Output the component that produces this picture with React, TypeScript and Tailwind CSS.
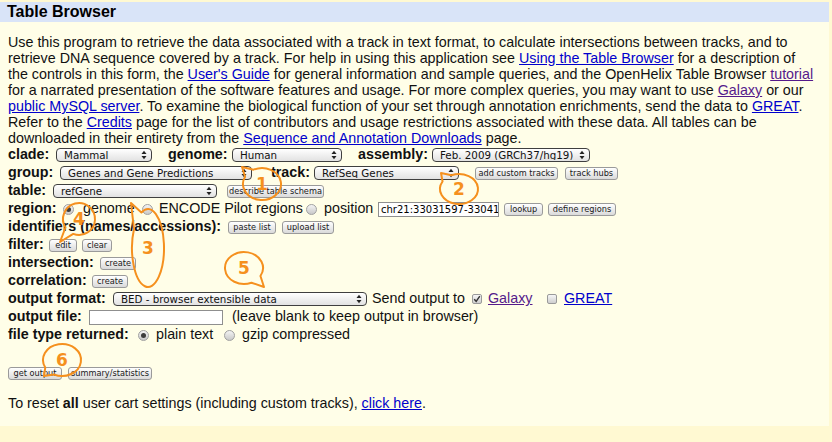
import React from 'react';

const widget = "font-['DejaVu_Sans',sans-serif]";

function Arrows() {
  return (
    <svg width="6" height="10" viewBox="0 0 6 10" className="shrink-0">
      <path d="M0.5 4 L3 0.8 L5.5 4 Z" fill="#222" />
      <path d="M0.5 6 L5.5 6 L3 9.2 Z" fill="#222" />
    </svg>
  );
}

function Select({ w, label }: { w: string; label: string }) {
  return (
    <div
      className={`${w} h-[14px] shrink-0 flex items-center rounded-[4px] border border-[#3f3f3f] bg-linear-to-b from-white to-[#e2e2e2] pl-[7px] pr-[4px] ${widget} text-[10.3px] leading-none text-[#111]`}
    >
      <span className="flex-1 truncate">{label}</span>
      <Arrows />
    </div>
  );
}

function Btn({ w, children }: { w: string; children: React.ReactNode }) {
  return (
    <button
      type="button"
      className={`${w} h-[13px] shrink-0 flex items-center justify-center rounded-[3px] border border-[#9a9a9a] bg-linear-to-b from-white to-[#dadada] ${widget} text-[8.2px] leading-none text-[#1a1a1a] whitespace-nowrap`}
    >
      {children}
    </button>
  );
}

function Radio({ checked = false }: { checked?: boolean }) {
  return (
    <span className="w-[11px] h-[11px] shrink-0 rounded-full border border-[#a0a0a0] bg-linear-to-b from-[#f4f4f4] to-[#c9c9c9] flex items-center justify-center">
      {checked && <span className="w-[5px] h-[5px] rounded-full bg-[#3c3c3c]" />}
    </span>
  );
}

function Check({ checked = false }: { checked?: boolean }) {
  return (
    <span className="w-[10px] h-[10px] shrink-0 rounded-[2px] border border-[#9a9a9a] bg-linear-to-b from-[#f6f6f6] to-[#cfcfcf] flex items-center justify-center">
      {checked && (
        <svg width="8" height="8" viewBox="0 0 8 8">
          <path d="M1.2 4.2 L3.2 6.3 L6.8 1.2" fill="none" stroke="#333" strokeWidth="1.4" />
        </svg>
      )}
    </span>
  );
}

function Link({ children, visited = false }: { children: React.ReactNode; visited?: boolean }) {
  return (
    <a href="#" className={visited ? 'underline text-[#551a8b]' : 'underline text-[#0000cc]'}>
      {children}
    </a>
  );
}

function Label({ w, children }: { w: string; children: React.ReactNode }) {
  return <span className={`${w} shrink-0 font-bold whitespace-nowrap`}>{children}</span>;
}

// speech bubble outline: ellipse with a pointed tail toward (tx, ty)
function bubblePath(cx: number, cy: number, rx: number, ry: number, tx: number, ty: number) {
  const t = Math.atan2((ty - cy) / ry, (tx - cx) / rx);
  const d = 0.32;
  const p = (a: number) => `${(cx + rx * Math.cos(a)).toFixed(2)} ${(cy + ry * Math.sin(a)).toFixed(2)}`;
  return `M ${p(t + d)} A ${rx} ${ry} 0 1 1 ${p(t - d)} L ${tx} ${ty} Z`;
}

const bubbles = [
  { n: '1', cx: 262, cy: 184, rx: 19, ry: 16, tx: 242, ty: 167 },
  { n: '2', cx: 459, cy: 189, rx: 19, ry: 15, tx: 441, ty: 173 },
  { n: '3', cx: 148, cy: 248, rx: 16, ry: 39, tx: 131, ty: 203 },
  { n: '4', cx: 79, cy: 219, rx: 16, ry: 16, tx: 60, ty: 242 },
  { n: '5', cx: 244, cy: 268, rx: 19, ry: 16, tx: 264, ty: 287 },
  { n: '6', cx: 62, cy: 360, rx: 19, ry: 16, tx: 44, ty: 376 },
];

function Bubbles() {
  return (
    <svg className="absolute left-0 top-0 pointer-events-none" width="832" height="442" viewBox="0 0 832 442">
      {bubbles.map((b) => (
        <g key={b.n}>
          <path d={bubblePath(b.cx, b.cy, b.rx, b.ry, b.tx, b.ty)} fill="none" stroke="#f5901e" strokeWidth="2" strokeLinejoin="round" />
          <text
            x={b.cx}
            y={b.cy + 6}
            textAnchor="middle"
            fontFamily="'DejaVu Sans', sans-serif"
            fontWeight="bold"
            fontSize="17"
            fill="#f5901e"
          >
            {b.n}
          </text>
        </g>
      ))}
    </svg>
  );
}

export default function App() {
  const row = 'h-[18px] flex items-center pl-[8px] whitespace-nowrap';
  return (
    <div className="relative w-[832px] h-[442px] bg-[#fff9d2] pt-[2px] pr-[3px] font-['Liberation_Sans',Arial,sans-serif] text-[14.3px] text-[#111] overflow-hidden">
      <div className="h-[424px] bg-[#fffee8]">
        <div className="h-[20px] bg-[#d9e4f8] flex items-center pl-[7px] text-[16px] font-bold text-black">
          Table Browser
        </div>

        <p className="pt-[12px] px-[8px] leading-[16px] whitespace-nowrap">
          Use this program to retrieve the data associated with a track in text format, to calculate intersections between tracks, and to
          <br />
          retrieve DNA sequence covered by a track. For help in using this application see <Link>Using the Table Browser</Link> for a description of
          <br />
          the controls in this form, the <Link>User's Guide</Link> for general information and sample queries, and the OpenHelix Table Browser{' '}
          <Link visited>tutorial</Link>
          <br />
          for a narrated presentation of the software features and usage. For more complex queries, you may want to use <Link visited>Galaxy</Link> or our
          <br />
          <Link>public MySQL server</Link>. To examine the biological function of your set through annotation enrichments, send the data to{' '}
          <Link>GREAT</Link>.
          <br />
          Refer to the <Link>Credits</Link> page for the list of contributors and usage restrictions associated with these data. All tables can be
          <br />
          downloaded in their entirety from the <Link>Sequence and Annotation Downloads</Link> page.
        </p>

        <div>
          <div className={row}>
            <Label w="w-[48px]">clade:</Label>
            <Select w="w-[96px]" label="Mammal" />
            <Label w="w-[64px] ml-[16px]">genome:</Label>
            <Select w="w-[110px]" label="Human" />
            <Label w="w-[74px] ml-[16px]">assembly:</Label>
            <Select w="w-[158px]" label="Feb. 2009 (GRCh37/hg19)" />
          </div>

          <div className={row}>
            <Label w="w-[52px]">group:</Label>
            <Select w="w-[192px]" label="Genes and Gene Predictions" />
            <Label w="w-[43px] ml-[19px]">track:</Label>
            <Select w="w-[145px]" label="RefSeq Genes" />
            <span className="ml-[16px]" />
            <Btn w="w-[83px]">add custom tracks</Btn>
            <span className="ml-[7px]" />
            <Btn w="w-[53px]">track hubs</Btn>
          </div>

          <div className={row}>
            <Label w="w-[45px]">table:</Label>
            <Select w="w-[164px]" label="refGene" />
            <span className="ml-[10px]" />
            <Btn w="w-[97px]">describe table schema</Btn>
          </div>

          <div className={row}>
            <Label w="w-[55px]">region:</Label>
            <Radio checked />
            <span className="ml-[9px] w-[59px] shrink-0">genome</span>
            <Radio />
            <span className="ml-[6px] w-[147px] shrink-0">ENCODE Pilot regions</span>
            <Radio />
            <span className="ml-[7px] w-[54px] shrink-0">position</span>
            <div className={`w-[121px] h-[15px] shrink-0 border border-[#8f8f8f] bg-white flex items-center pl-[2px] overflow-hidden ${widget} text-[10px] text-black`}>
              chr21:33031597-33041
            </div>
            <span className="ml-[5px]" />
            <Btn w="w-[39px]">lookup</Btn>
            <span className="ml-[5px]" />
            <Btn w="w-[68px]">define regions</Btn>
          </div>

          <div className={row}>
            <Label w="w-[220px]">identifiers (names/accessions):</Label>
            <Btn w="w-[48px]">paste list</Btn>
            <span className="ml-[6px]" />
            <Btn w="w-[52px]">upload list</Btn>
          </div>

          <div className={row}>
            <Label w="w-[41px]">filter:</Label>
            <Btn w="w-[28px]">edit</Btn>
            <span className="ml-[5px]" />
            <Btn w="w-[30px]">clear</Btn>
          </div>

          <div className={row}>
            <Label w="w-[92px]">intersection:</Label>
            <Btn w="w-[36px]">create</Btn>
          </div>

          <div className={row}>
            <Label w="w-[84px]">correlation:</Label>
            <Btn w="w-[36px]">create</Btn>
          </div>

          <div className={row}>
            <Label w="w-[105px]">output format:</Label>
            <Select w="w-[254px]" label="BED - browser extensible data" />
            <span className="ml-[5px] w-[100px] shrink-0">Send output to</span>
            <Check checked />
            <span className="ml-[6px] w-[59px] shrink-0">
              <Link visited>Galaxy</Link>
            </span>
            <Check />
            <span className="ml-[7px]">
              <Link>GREAT</Link>
            </span>
          </div>

          <div className={row}>
            <Label w="w-[81px]">output file:</Label>
            <div className="w-[134px] h-[15px] shrink-0 border border-[#8f8f8f] bg-white" />
            <span className="ml-[9px]">(leave blank to keep output in browser)</span>
          </div>

          <div className={row}>
            <Label w="w-[130px]">file type returned:</Label>
            <Radio checked />
            <span className="ml-[7px] w-[68px] shrink-0">plain text</span>
            <Radio />
            <span className="ml-[7px]">gzip compressed</span>
          </div>
        </div>

        <div className="mt-[23px] h-[13px] flex items-center pl-[8px]">
          <Btn w="w-[54px]">get output</Btn>
          <span className="ml-[6px]" />
          <Btn w="w-[84px]">summary/statistics</Btn>
        </div>

        <p className="mt-[15px] pl-[8px] leading-[16px] whitespace-nowrap">
          To reset <b>all</b> user cart settings (including custom tracks), <Link>click here</Link>.
        </p>
      </div>
      <Bubbles />
    </div>
  );
}
